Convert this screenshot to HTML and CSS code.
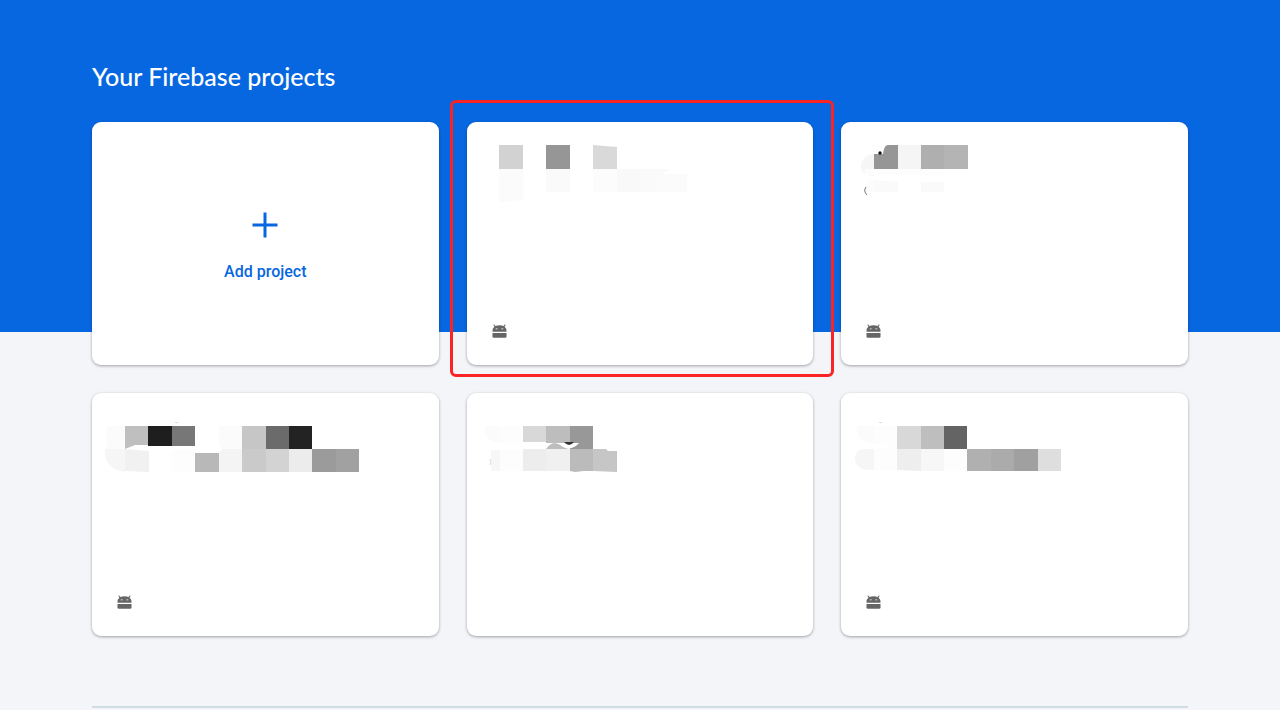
FILE: index.html
```html
<!DOCTYPE html>
<html lang="en">
<head>
<meta charset="utf-8">
<meta name="viewport" content="width=device-width, initial-scale=1">
<title>Firebase projects</title>
<link rel="stylesheet" href="styles.css">
</head>
<body>
<svg class="defs" aria-hidden="true">
  <symbol id="android" viewBox="0 0 16 16">
    <path fill="#666" fill-rule="evenodd" d="M1.300.8 2.300.4 3.700 2Q5.500 1.400 8 1.400T12.300 2L13.700.4l1 .4-1.300 1.900Q15.400 4.200 15.500 8.300H.5Q.6 4.200 2.600 2.700ZM4 4.700v1h2v-1ZM10 4.700v1h2v-1Z"/>
    <path fill="#666" d="M.5 9.500h15V13q0 1.700-1.500 1.700H2Q.5 14.700.5 13Z"/>
  </symbol>
</svg>
<main class="page">
  <h1 class="title">Your Firebase projects</h1>
  <section class="grid" aria-label="Projects">
    <button class="card add" type="button">
      <svg class="plus" viewBox="0 0 26 26" aria-hidden="true"><path d="M13 .5v25M.5 13h25"/></svg>
      <span>Add project</span>
    </button>

    <a class="card marked" href="#project-1" aria-label="Project 1">
      <svg class="mosaic" viewBox="467 122 300 110" aria-hidden="true">
        <path fill="#d2d2d2" d="M499 145h24v24h-24z"/>
        <path fill="#969696" d="M546 145h24v24h-24z"/>
        <path fill="#d9d9d9" d="M593 145l24 2v22h-24z"/>
        <path fill="#fbfbfb" d="M499 169h24v31l-24 2z"/>
        <path fill="#fafafa" d="M546 169h24v23h-24z"/>
        <path fill="#fcfcfc" d="M593 169h24v23h-24z"/>
        <path fill="#f9f9f9" d="M617 169h24v23h-24z"/>
        <path fill="#fafafa" d="M641 169h30l-8 5v18h-22z"/>
        <path fill="#fbfbfb" d="M663 174h24v18h-24z"/>
      </svg>
      <svg class="platform" role="img" aria-label="Android"><use href="#android"/></svg>
    </a>

    <a class="card" href="#project-2" aria-label="Project 2">
      <svg class="mosaic" viewBox="841 122 300 110" aria-hidden="true">
        <path fill="#f6f6f6" d="M874 154v22q-8 0-12-5-3-8 3-14 4-3 9-3z"/>
        <path fill="#969696" d="M874 154h9q1-9 5-9h10v24h-24z"/>
        <path fill="#f5f5f5" d="M898 145h23v24h-23z"/>
        <path fill="#afafaf" d="M921 145h23v24h-23z"/>
        <path fill="#b4b4b4" d="M944 145h24v24h-24z"/>
        <path fill="#fdfdfd" d="M865 169h80v6h-80z"/>
        <path fill="#fafafa" d="M874 180l24 2v10h-24zM921 182h23v10h-23z"/>
        <path fill="#fcfcfc" d="M874 180q-9 0-8 12h8z"/>
        <circle cx="880" cy="153" r="1.700" fill="#111"/>
        <path fill="none" stroke="#777" d="M866 187q-3 4 1 8"/>
      </svg>
      <svg class="platform" role="img" aria-label="Android"><use href="#android"/></svg>
    </a>

    <a class="card" href="#project-3" aria-label="Project 3">
      <svg class="mosaic" viewBox="92 393 300 110" aria-hidden="true">
        <path fill="#fbfbfb" d="M125 426v24h-19l2-9q-4-7-1-15z"/>
        <path fill="#bfbfbf" d="M125 426h24v19h-14l-10 4z"/>
        <path fill="#1e1e1e" d="M148 426h24v20h-24z"/>
        <path fill="#777" d="M172 426h23v20h-23z"/>
        <path fill="#fbfbfb" d="M219 426h23v24h-20l-3-6z"/>
        <path fill="#c6c6c6" d="M242 426h24v24h-24z"/>
        <path fill="#6b6b6b" d="M266 426h23v24h-23z"/>
        <path fill="#232323" d="M289 426h23v24h-23z"/>
        <path fill="#f6f6f6" d="M105 449h20v23q-11-1-17-9-4-6-3-14z"/>
        <path fill="#f1f1f1" d="M125 449l24 2v21l-24-1z"/>
        <path fill="#fdfdfd" d="M172 450h23v22h-23z"/>
        <path fill="#b8b8b8" d="M195 453h24v19h-24z"/>
        <path fill="#f4f4f4" d="M219 453l4-4h19v23h-23z"/>
        <path fill="#cacaca" d="M242 449h24v23h-24z"/>
        <path fill="#d3d3d3" d="M266 449h23v23h-23z"/>
        <path fill="#ececec" d="M289 449h23v23h-23z"/>
        <path fill="#9b9b9b" d="M312 449h24v23h-24z"/>
        <path fill="#a1a1a1" d="M336 449h23v23h-23z"/>
        <path fill="#ddd" d="M175 422h3v1h-3z"/>
      </svg>
      <svg class="platform" role="img" aria-label="Android"><use href="#android"/></svg>
    </a>

    <a class="card" href="#project-4" aria-label="Project 4">
      <svg class="mosaic" viewBox="467 393 300 110" aria-hidden="true">
        <path fill="#fbfbfb" d="M485 426h15v16q-10 1-14-7-2-5-1-9z"/>
        <path fill="#fdfdfd" d="M500 426h23v17h-23z"/>
        <path fill="#d8d8d8" d="M523 426h23v16h-23z"/>
        <path fill="#bdbdbd" d="M546 426h24v17h-24z"/>
        <path fill="#989898" d="M570 426h23v24h-23z"/>
        <path fill="#bdbdbd" d="M546 449q4-6 9-6 5 1 8 4 4 2 7 2z"/>
        <path fill="#fff" d="M560 443h19q-5 6-11 5-5-1-8-5z"/>
        <path fill="#333" d="M564 442h10q-5 6-10 0z"/>
        <path fill="#f7f7f7" d="M491 450h9v21h-9z"/>
        <path fill="#fdfdfd" d="M500 450h23v21h-23z"/>
        <path fill="#ededed" d="M523 449h24v22h-24z"/>
        <path fill="#f0f0f0" d="M546 449h24v22h-24z"/>
        <path fill="#bbb" d="M570 449h23v22h-9l-9 1-5-1z"/>
        <path fill="#c6c6c6" d="M593 449h13l2 2h9v21l-24-1z"/>
        <path fill="none" stroke="#ddd" d="M490 459q2 3 0 6"/>
      </svg>
    </a>

    <a class="card" href="#project-5" aria-label="Project 5">
      <svg class="mosaic" viewBox="841 393 300 110" aria-hidden="true">
        <path fill="#fbfbfb" d="M857 426h17v18q-13-1-16-9-2-5-1-9z"/>
        <path fill="#fdfdfd" d="M874 426h24v24h-11v-6h-13z"/>
        <path fill="#d8d8d8" d="M897 426h24v24h-24z"/>
        <path fill="#bebebe" d="M921 426h23v24h-23z"/>
        <path fill="#646464" d="M944 426h23v24h-23z"/>
        <path fill="#f6f6f6" d="M874 449v21h-7q-12-2-12-12 1-8 7-9z"/>
        <path fill="#fdfdfd" d="M874 449h23v21h-23z"/>
        <path fill="#eee" d="M897 449h24v22l-24-1z"/>
        <path fill="#f7f7f7" d="M921 449h23v22h-23z"/>
        <path fill="#fdfdfd" d="M944 449h23v22h-23z"/>
        <path fill="#b0b0b0" d="M967 449h24v22h-24z"/>
        <path fill="#ababab" d="M991 449h23v22h-23z"/>
        <path fill="#a0a0a0" d="M1014 449h24v22h-24z"/>
        <path fill="#dedede" d="M1038 449h23v22h-23z"/>
        <path fill="#ddd" d="M879 422h3v1h-3z"/>
      </svg>
      <svg class="platform" role="img" aria-label="Android"><use href="#android"/></svg>
    </a>
  </section>
  <hr class="rule">
</main>
</body>
</html>
```
FILE: styles.css
```css
* {
  box-sizing: border-box;
}

body {
  margin: 0;
  background: linear-gradient(#0667e1 332px, #f4f5f8 332px) no-repeat #f4f5f8;
  font-family: Roboto, "Liberation Sans", sans-serif;
}

.defs {
  display: block;
  width: 0;
  height: 0;
}

.page {
  max-width: 1280px;
  margin: 0 auto;
  padding: 60px 92px 0;
}

.title {
  margin: 0 0 30px;
  color: #fff;
  font: 500 25px/32px Lato, sans-serif;
}

.grid {
  display: grid;
  grid-template-columns: repeat(3, 1fr);
  gap: 28px;
}

.card {
  position: relative;
  display: flex;
  flex-direction: column;
  justify-content: space-between;
  min-height: 243px;
  padding: 0 0 26px;
  border: 0;
  border-radius: 9px;
  background: #fff;
  box-shadow: 0 1px 3px rgba(30, 35, 45, 0.4);
  text-decoration: none;
}

.add {
  align-items: center;
  justify-content: center;
  gap: 24px;
  padding: 6px 0 0;
  color: #0667e1;
  font: 500 16px/20px Roboto, sans-serif;
  cursor: pointer;
}

.plus {
  width: 26px;
  height: 26px;
  fill: none;
  stroke: #0667e1;
  stroke-width: 3;
}

.mosaic {
  width: 300px;
  height: 110px;
}

.platform {
  width: 15px;
  height: 15px;
  margin-left: 25px;
}

.marked::after {
  content: "";
  position: absolute;
  inset: -22px -21px -12px -17px;
  border: 3px solid #fb2424;
  border-radius: 6px;
  pointer-events: none;
}

.rule {
  height: 2px;
  margin: 70px 0 0;
  border: 0;
  background: #d0dce4;
}
```
